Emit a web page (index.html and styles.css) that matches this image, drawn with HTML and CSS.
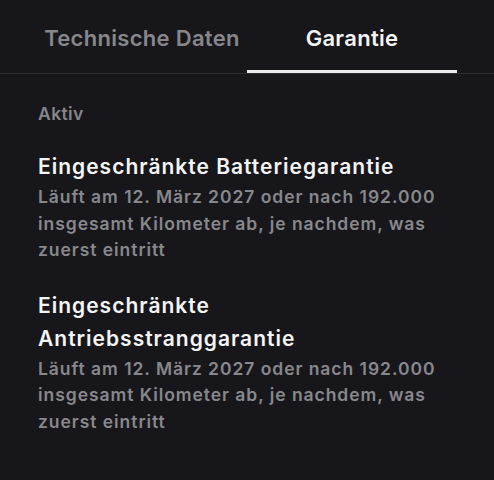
FILE: index.html
```html
<!DOCTYPE html>
<html lang="de">
<head>
<meta charset="utf-8">
<title>Garantie</title>
<link rel="stylesheet" href="styles.css">
</head>
<body>
<div class="tabs">
  <div class="tab">Technische Daten</div>
  <div class="tab active">Garantie</div>
</div>
<div class="content">
  <div class="section-label">Aktiv</div>
  <div class="item">
    <div class="item-title">Eingeschränkte Batteriegarantie</div>
    <div class="item-desc">Läuft am 12. März 2027 oder nach 192.000 insgesamt Kilometer ab, je nachdem, was zuerst eintritt</div>
  </div>
  <div class="item">
    <div class="item-title">Eingeschränkte Antriebsstranggarantie</div>
    <div class="item-desc">Läuft am 12. März 2027 oder nach 192.000 insgesamt Kilometer ab, je nachdem, was zuerst eintritt</div>
  </div>
</div>
</body>
</html>
```

FILE: styles.css
```css
html, body {
  margin: 0;
  padding: 0;
  background: #17171b;
  font-family: Inter, "Noto Sans", sans-serif;
}
.tabs {
  display: flex;
  padding: 0 37px;
  border-bottom: 1px solid #2c2c31;
}
.tab {
  flex: 1;
  text-align: center;
  font-size: 22px;
  font-weight: 600;
  letter-spacing: 0.3px;
  line-height: 26px;
  color: #87878b;
  padding: 25px 0 19px;
  border-bottom: 3px solid transparent;
}
.tab.active {
  color: #f4f4f4;
  border-bottom-color: #ececec;
}
.content {
  padding: 29px 38px 0;
}
.section-label {
  font-size: 17.5px;
  font-weight: 600;
  letter-spacing: 0.4px;
  line-height: 22px;
  color: #86868a;
  margin-bottom: 1px;
}
.item {
  margin-top: 25px;
}
.item-title {
  font-size: 21px;
  font-weight: 600;
  letter-spacing: 1px;
  line-height: 33px;
  color: #f4f4f4;
  max-width: 410px;
}
.item-desc {
  margin-top: 1px;
  font-size: 17.5px;
  font-weight: 600;
  letter-spacing: 0.95px;
  line-height: 26.5px;
  color: #88888c;
}
```
